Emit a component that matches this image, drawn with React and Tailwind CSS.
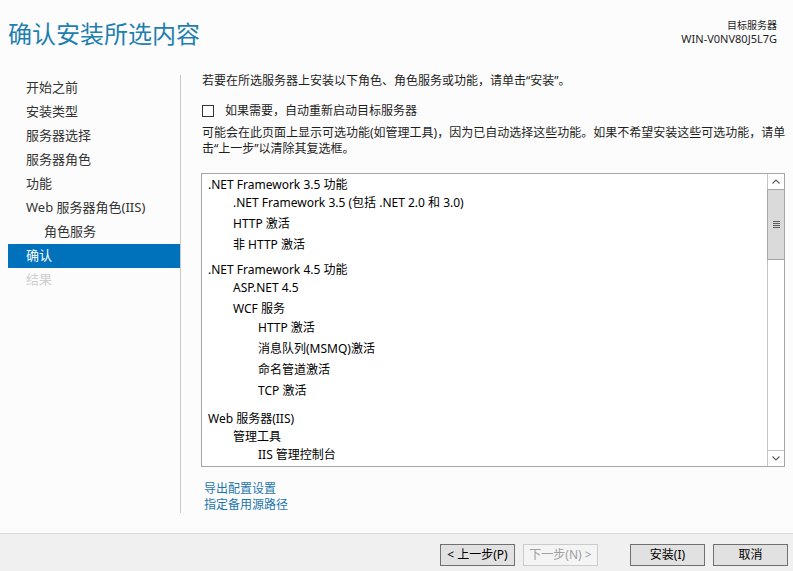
const navItems = [
  { t: '开始之前', cls: 'pl-[18px] text-[#333333]' },
  { t: '安装类型', cls: 'pl-[18px] text-[#333333]' },
  { t: '服务器选择', cls: 'pl-[18px] text-[#333333]' },
  { t: '服务器角色', cls: 'pl-[18px] text-[#333333]' },
  { t: '功能', cls: 'pl-[18px] text-[#333333]' },
  { t: 'Web 服务器角色(IIS)', cls: 'pl-[18px] text-[#333333]' },
  { t: '角色服务', cls: 'pl-[36px] text-[#333333]' },
  { t: '确认', cls: 'pl-[18px] text-white bg-[#0072bc]' },
  { t: '结果', cls: 'pl-[18px] text-[#cfcfcf]' },
];

const listItems = [
  { t: '.NET Framework 3.5 功能', cls: 'pl-[6px]' },
  { t: '.NET Framework 3.5 (包括 .NET 2.0 和 3.0)', cls: 'pl-[31px]' },
  { t: 'HTTP 激活', cls: 'pl-[31px] mt-[3px]' },
  { t: '非 HTTP 激活', cls: 'pl-[31px] mt-[3px]' },
  { t: '.NET Framework 4.5 功能', cls: 'pl-[6px] mt-[7px]' },
  { t: 'ASP.NET 4.5', cls: 'pl-[31px]' },
  { t: 'WCF 服务', cls: 'pl-[31px] mt-[3px]' },
  { t: 'HTTP 激活', cls: 'pl-[56px] mt-[1px]' },
  { t: '消息队列(MSMQ)激活', cls: 'pl-[56px] mt-[3px]' },
  { t: '命名管道激活', cls: 'pl-[56px] mt-[3px]' },
  { t: 'TCP 激活', cls: 'pl-[56px] mt-[3px]' },
  { t: 'Web 服务器(IIS)', cls: 'pl-[6px] mt-[10px]' },
  { t: '管理工具', cls: 'pl-[31px]' },
  { t: 'IIS 管理控制台', cls: 'pl-[56px]' },
];

const Chevron = ({ up }) => (
  <svg width="8" height="5" viewBox="0 0 8 5">
    <path d={up ? 'M0.5 4.5 L4 1 L7.5 4.5' : 'M0.5 0.5 L4 4 L7.5 0.5'} fill="none" stroke="#606060" strokeWidth="1.2" />
  </svg>
);

const Button = ({ children, disabled, className = '' }) => (
  <div
    className={
      'w-[75px] h-[22px] flex items-center justify-center text-[12px] border ' +
      (disabled ? 'border-[#cccccc] bg-[#f4f4f4] text-[#a0a0a0] ' : 'border-[#707070] bg-[#e1e1e1] text-black ') +
      className
    }
  >
    {children}
  </div>
);

const App = () => {
  return (
    <div className="w-[793px] h-[571px] bg-[#fcfcfc] flex flex-col overflow-hidden font-['Noto_Sans','Noto_Sans_CJK_SC',sans-serif]">
      {/* header */}
      <div className="h-[75px] flex justify-between shrink-0">
        <div className="pl-[8px] pt-[22px] text-[24px] leading-[24px] text-[#1f80b0]">确认安装所选内容</div>
        <div className="pr-[16px] pt-[19px] text-right text-[#1e1e1e]">
          <div className="text-[10px] leading-[13px]">目标服务器</div>
          <div className="text-[11px] leading-[13px]">WIN-V0NV80J5L7G</div>
        </div>
      </div>

      {/* middle */}
      <div className="flex h-[458px] shrink-0">
        <div className="w-[181px] pb-[20px] shrink-0">
          <div className="h-full border-r border-[#c8c8c8] pl-[8px] pt-[1px] text-[13px]">
            {navItems.map((n) => (
              <div key={n.t} className={'h-[24px] flex items-center ' + n.cls}>
                {n.t}
              </div>
            ))}
          </div>
        </div>

        <div className="pl-[21px] flex flex-col text-[12px] text-[#1e1e1e]">
          <div className="leading-[12px] whitespace-nowrap">若要在所选服务器上安装以下角色、角色服务或功能，请单击“安装”。</div>
          <div className="mt-[18px] h-[12px] flex items-center">
            <div className="w-[12px] h-[12px] border border-[#333333] bg-white" />
            <span className="ml-[11px] whitespace-nowrap">如果需要，自动重新启动目标服务器</span>
          </div>
          <div className="mt-[8px] leading-[16px] whitespace-nowrap">
            可能会在此页面上显示可选功能(如管理工具)，因为已自动选择这些功能。如果不希望安装这些可选功能，请单
            <br />
            击“上一步”以清除其复选框。
          </div>

          <div className="mt-[16px] w-[584px] h-[294px] border border-[#a5a5a5] bg-white flex -ml-[1px]">
            <div className="flex-1 pt-[2px] text-black">
              {listItems.map((it, i) => (
                <div key={i} className={'h-[18px] flex items-center whitespace-nowrap ' + it.cls}>
                  {it.t}
                </div>
              ))}
            </div>
            <div className="w-[17px] border-l border-[#c4c4c4] flex flex-col">
              <div className="h-[16px] border-b border-[#c4c4c4] flex items-center justify-center">
                <Chevron up />
              </div>
              <div className="h-[71px] bg-[#dadada] border border-[#a6a6a6] -mx-[1px] -mt-[1px] flex items-center justify-center">
                <svg width="7" height="8" viewBox="0 0 7 8">
                  <rect x="0" y="0" width="7" height="1" fill="#5a5a5a" />
                  <rect x="0" y="2" width="7" height="1" fill="#5a5a5a" />
                  <rect x="0" y="4" width="7" height="1" fill="#5a5a5a" />
                  <rect x="0" y="6" width="7" height="1" fill="#5a5a5a" />
                </svg>
              </div>
              <div className="flex-1" />
              <div className="h-[16px] border-t border-[#c4c4c4] flex items-center justify-center">
                <Chevron />
              </div>
            </div>
          </div>

          <div className="mt-[14px] leading-[16px] text-[#1e76ac] pl-[2px]">
            <div>导出配置设置</div>
            <div>指定备用源路径</div>
          </div>
        </div>
      </div>

      {/* footer */}
      <div className="flex-1 border-t border-[#d9d9d9] bg-[#f0f0f0] pt-[10px] pr-[5px] flex justify-end items-start">
        <Button>&lt; 上一步(P)</Button>
        <Button disabled className="ml-[8px]">下一步(N) &gt;</Button>
        <Button className="ml-[32px]">安装(I)</Button>
        <Button className="ml-[8px]">取消</Button>
      </div>
    </div>
  );
};

export default App;
